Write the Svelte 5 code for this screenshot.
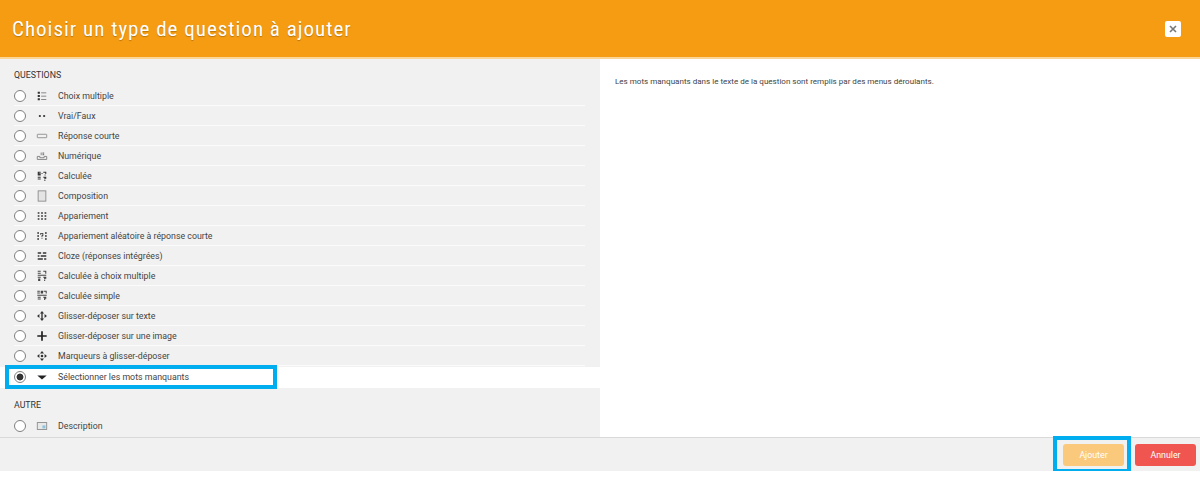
<script>
  const questions = [
    ['Choix multiple', 'list'],
    ['Vrai/Faux', 'dots'],
    ['Réponse courte', 'short'],
    ['Numérique', 'num'],
    ['Calculée', 'calc'],
    ['Composition', 'essay'],
    ['Appariement', 'match'],
    ['Appariement aléatoire à réponse courte', 'rand'],
    ['Cloze (réponses intégrées)', 'cloze'],
    ['Calculée à choix multiple', 'calcm'],
    ['Calculée simple', 'calcs'],
    ['Glisser-déposer sur texte', 'ddt'],
    ['Glisser-déposer sur une image', 'ddi'],
    ['Marqueurs à glisser-déposer', 'ddm'],
    ['Sélectionner les mots manquants', 'caret']
  ];
</script>

{#snippet icon(name)}
  <svg class="icon" width="12" height="12" viewBox="0 0 14 14" fill="#333" aria-hidden="true">
    {#if name === 'list'}
      <path d="M2 2h2.500v2.500H2zM2 5.800h2.500v2.500H2zM2 9.600h2.500v2.500H2z" /><path d="M6 2.800h6v1H6zM6 6.600h6v1H6zM6 10.400h6v1H6z" fill="#666" />
    {:else if name === 'dots'}
      <circle cx="4.500" cy="7" r="1.300" /><circle cx="9.500" cy="7" r="1.300" />
    {:else if name === 'short'}
      <rect x="1.500" y="5" width="11" height="4" rx="0.500" fill="none" stroke="#888" />
    {:else if name === 'num'}
      <path d="M1.500 7.500v3.500h11V7.500H9.500V9h-5V7.500z" fill="none" stroke="#777" /><path d="M5.500 3h1v3h-1zM7.500 3h2v1h-1v.5h1V6h-2V5h1v-.5h-1z" fill="#777" />
    {:else if name === 'calc'}
      <path d="M2 2h3.500v1.200H3.400v.6h2.100v2.500H2zM6.300 3.500h1.500v1H6.300zM8.500 2H12v2.600h-1.200V3.200H8.500zM10 5.200h1.200v1.100H10zM2 8h3.500v1.100H2zM2 10h3.500v1.100H2zM8.500 8H12v2.200h-1.200v1H9.800V9.100H8.500zM9.800 11.700h1.100v1H9.800z" />
    {:else if name === 'essay'}
      <rect x="2.500" y="1" width="9" height="12" fill="#e4e4e4" stroke="#888" />
    {:else if name === 'match'}
      <path d="M2 2.500h2v2H2zM6 2.500h2v2H6zM10 2.500h2v2h-2zM2 6h2v2H2zM6 6h2v2H6zM10 6h2v2h-2zM2 9.500h2v2H2zM6 9.500h2v2H6zM10 9.500h2v2h-2z" />
    {:else if name === 'rand'}
      <path d="M1.500 2.500h2v2h-2zM1.500 6h2v2h-2zM1.500 9.500h2v2h-2zM10.500 2.500h2v2h-2zM10.500 6h2v2h-2zM10.500 9.500h2v2h-2zM5 3.500h3.500v3.500H7.500V8.500h-1V6h1V4.500H6v1H5zM6.500 9.500h1v1h-1z" />
    {:else if name === 'cloze'}
      <path d="M2 2.500h4v1.800H2zM8 2.500h4v1.800H8zM2 6h2v1.800H2zM5.500 6h6.500v1.800H5.500zM2 9.500h6v1.800H2zM9.500 9.500H12v1.800H9.500z" />
    {:else if name === 'calcm'}
      <path d="M2 1h3.500v1.100H2zM2 3.200h3.500v1.100H2zM8.500 1H12v3.300h-1.200V2.100H8.500zM2 5.500h10v1.100H2zM2 8h3.500v1.100H2zM2.500 10h2.500v2.700H2.500zM8.500 8H12v2.200h-1.200v1H9.500V9.100h-1zM9.500 11.700h1.200v1H9.500z" fill="#444" />
    {:else if name === 'calcs'}
      <path d="M1.500 1h3v1.100h-3zM1.500 3h3v1.100h-3zM5.500 1h2.800v3.100H5.500zM9 1h3.500v3.100h-1.200V2.100H9zM1.500 5.500h11v1.200h-11zM2 8h3.500v1.100H2zM2 10h3.500v1.100H2zM8.500 8H12v2.200h-1.200v1.500H9.500V9.100h-1z" fill="#444" />
    {:else if name === 'ddt'}
      <path d="M7 1.200l2.400 2.800H4.600zM7 12.800l-2.400-2.800h4.800zM1.200 7L4 4.600v4.800zM12.800 7L10 9.400V4.600z" /><path d="M6.200 3.500h1.600v7H6.200z" />
    {:else if name === 'ddm'}
      <path d="M7 1.200l2.400 2.800H4.600zM7 12.800l-2.400-2.800h4.800zM1.200 7L4 4.600v4.800zM12.800 7L10 9.400V4.600z" /><circle cx="7" cy="7" r="1.500" />
    {:else if name === 'ddi'}
      <path d="M6 1.500h2v4.500h4.500v2H8v4.500H6V8H1.500V6H6z" fill="#222" />
    {:else if name === 'caret'}
      <path d="M1.500 5.200h11L7 9.800z" fill="#222" />
    {:else if name === 'desc'}
      <rect x="1.500" y="3" width="11" height="8" fill="#e8e8e8" stroke="#888" /><rect x="7.500" y="6.300" width="3.500" height="3.500" fill="#8cc4dc" />
    {/if}
  </svg>
{/snippet}

{#snippet row(label, name, selected, last)}
  <label class="row" class:selected class:last>
    <span class="radio"></span>
    <span class="ic">{@render icon(name)}</span>
    <span class="label">{label}</span>
    {#if selected}<span class="mark mark-row"></span>{/if}
  </label>
{/snippet}

<div class="dialog">
  <header>
    <h1>Choisir un type de question à ajouter</h1>
    <button class="close" aria-label="Fermer">
      <svg width="8" height="8" viewBox="0 0 8 8"><path d="M1 1l6 6M7 1L1 7" stroke="#777" stroke-width="1.600" /></svg>
    </button>
  </header>
  <main>
    <section class="options">
      <h2 class="first">QUESTIONS</h2>
      {#each questions as q, i}
        {@render row(q[0], q[1], i === questions.length - 1, false)}
      {/each}
      <h2 class="second">AUTRE</h2>
      {@render row('Description', 'desc', false, true)}
    </section>
    <section class="summary">
      <p>Les mots manquants dans le texte de la question sont remplis par des menus déroulants.</p>
    </section>
  </main>
  <footer>
    <span class="add-wrap">
      <button class="btn add">Ajouter</button>
      <span class="mark mark-btn"></span>
    </span>
    <button class="btn cancel">Annuler</button>
  </footer>
</div>

<style>
  :global(body) {
    margin: 0;
    background: #fff;
  }
  .dialog {
    width: 1200px;
    height: 471px;
    display: flex;
    flex-direction: column;
    font-family: Roboto, "Liberation Sans", sans-serif;
    color: #444;
  }
  header {
    height: 57px;
    flex: none;
    background: #f59c13;
    border-bottom: 2px solid #fbd596;
    box-sizing: content-box;
    display: flex;
    align-items: center;
    justify-content: space-between;
    padding: 0 19px 0 12px;
  }
  h1 {
    margin: 0;
    color: #fff;
    font-family: Roboto, sans-serif;
    font-stretch: 75%;
    font-weight: 400;
    font-size: 21px;
    letter-spacing: 1px;
    text-shadow: 0 1px 1px rgba(0, 0, 0, 0.25);
  }
  .close {
    width: 16px;
    height: 16px;
    padding: 0;
    margin-top: 1px;
    border: 0;
    border-radius: 2px;
    background: #fff;
    display: flex;
    align-items: center;
    justify-content: center;
  }
  main {
    flex: 1;
    display: flex;
    min-height: 0;
  }
  .options {
    width: 600px;
    flex: none;
    background: #f1f1f1;
    overflow: hidden;
  }
  h2 {
    margin: 0;
    padding-left: 14px;
    font-size: 8.800px;
    font-weight: 400;
    line-height: 12px;
    color: #333;
  }
  h2.first {
    padding-top: 10px;
    padding-bottom: 5px;
  }
  h2.second {
    padding-top: 11px;
    padding-bottom: 5px;
  }
  .row {
    position: relative;
    display: flex;
    align-items: center;
    height: 20px;
    margin: 0 15px 0 14px;
    padding-top: 1px;
    border-bottom: 1px solid #fbfbfb;
    box-sizing: border-box;
  }
  .row.last {
    border-bottom-color: transparent;
  }
  .row.selected {
    height: 21px;
    margin: 1px 0 0 0;
    padding: 0 0 1px 14px;
    border-bottom: 0;
    background: #fff;
  }
  .radio {
    width: 12px;
    height: 12px;
    flex: none;
    box-sizing: border-box;
    border: 1px solid #808080;
    border-radius: 50%;
    background: #fff;
  }
  .selected .radio {
    background: radial-gradient(circle, #333 0 3.200px, #fff 3.700px);
  }
  .ic {
    width: 12px;
    height: 12px;
    flex: none;
    margin-left: 10px;
    display: flex;
  }
  .label {
    margin-left: 10px;
    font-size: 8.800px;
    line-height: 12px;
    color: #444;
  }
  .mark {
    position: absolute;
    border: 4px solid #00aeef;
    box-sizing: border-box;
    pointer-events: none;
  }
  .mark-row {
    left: 5px;
    top: -2px;
    width: 272px;
    height: 24px;
  }
  .summary {
    flex: 1;
    padding: 17px 15px;
    background: #fff;
  }
  .summary p {
    margin: 0;
    font-size: 8.050px;
    line-height: 12px;
    color: #444;
  }
  footer {
    height: 34px;
    flex: none;
    box-sizing: border-box;
    background: #f1f1f1;
    border-top: 1px solid #d9d9d9;
    display: flex;
    justify-content: flex-end;
    align-items: center;
    gap: 11px;
    padding: 1px 4px 0 0;
  }
  .add-wrap {
    position: relative;
    display: flex;
  }
  .btn {
    width: 61px;
    height: 22px;
    padding: 0;
    border: 0;
    border-radius: 3px;
    color: #fff;
    font-family: inherit;
    font-size: 8.800px;
  }
  .add {
    background: #fbc97b;
  }
  .cancel {
    background: #f05550;
  }
  .mark-btn {
    left: -10px;
    top: -8px;
    width: 78px;
    height: 37px;
  }
</style>
